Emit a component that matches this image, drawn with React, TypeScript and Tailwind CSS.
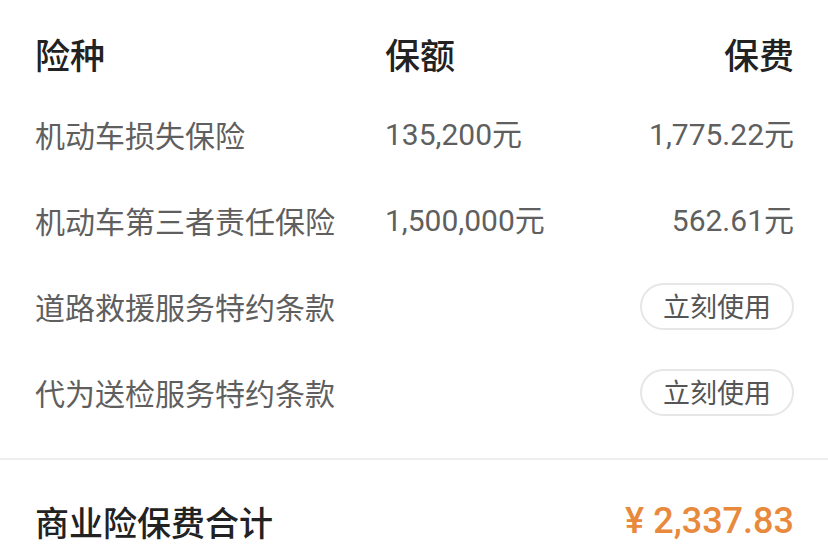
import React from "react";

const cjk = "font-['Noto_Sans_CJK_SC',sans-serif]";
const num = "font-['Roboto','Noto_Sans_CJK_SC',sans-serif]";

function Row({ name, amount, fee, button }: { name: string; amount?: string; fee?: string; button?: boolean }) {
  return (
    <div className="flex h-[86px] items-center">
      <div className={`w-[350px] text-[30px] text-[#5f5f5f] ${cjk}`}>{name}</div>
      <div className={`flex-1 text-[30px] text-[#5f5f5f] ${num}`}>{amount}</div>
      {fee && <div className={`text-[30px] text-[#5f5f5f] ${num}`}>{fee}</div>}
      {button && (
        <div className={`flex h-[47px] w-[154px] items-center justify-center rounded-full border-2 border-[#e6e6e6] text-[27px] text-[#555] ${cjk}`}>
          立刻使用
        </div>
      )}
    </div>
  );
}

export default function App() {
  return (
    <div className="h-[560px] w-[828px] overflow-hidden bg-white">
      <div className="pl-[35px] pr-[34px] pt-[17px]">
        <div className={`flex h-[74px] items-center text-[35px] font-medium text-[#222] ${cjk}`}>
          <div className="w-[350px]">险种</div>
          <div className="flex-1">保额</div>
          <div>保费</div>
        </div>
        <Row name="机动车损失保险" amount="135,200元" fee="1,775.22元" />
        <Row name="机动车第三者责任保险" amount="1,500,000元" fee="562.61元" />
        <Row name="道路救援服务特约条款" button />
        <Row name="代为送检服务特约条款" button />
      </div>
      <div className="mt-[23px] h-[2px] bg-[#eeeeee]" />
      <div className="flex h-[122px] items-center justify-between pl-[35px] pr-[34px]">
        <div className={`text-[34px] font-medium text-[#222] ${cjk}`}>商业险保费合计</div>
        <div className={`text-[36px] font-medium text-[#e8893c] ${num}`}>¥ 2,337.83</div>
      </div>
    </div>
  );
}
